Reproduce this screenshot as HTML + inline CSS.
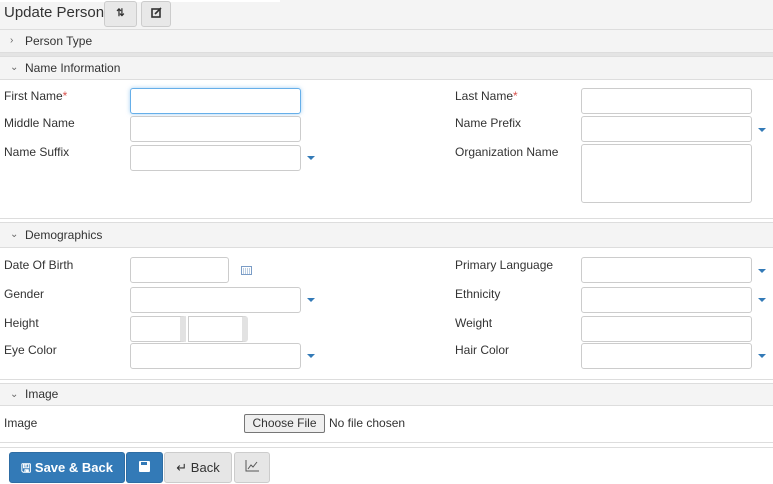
<!DOCTYPE html>
<html><head><style>
*{box-sizing:border-box;margin:0;padding:0}
body{width:773px;height:484px;background:#fff;font-family:"Liberation Sans",Arial,sans-serif;font-size:12px;color:#333;position:relative;overflow:hidden}
.a{position:absolute}
.hdr{position:absolute;left:0;width:773px;background:#f4f4f4;border-top:1px solid #ddd;border-bottom:1px solid #ddd;font-size:12px;color:#333;padding-left:25px;line-height:22px}
.hdr .c{position:absolute;left:10px;top:0;font-size:10px;color:#666}
.lbl{position:absolute;left:4px;font-size:12px;color:#333}
.rl{left:455px}
.in{position:absolute;border:1px solid #ccc;border-radius:3px;background:#fff;height:26px}
.car{position:absolute;width:0;height:0;border-left:4px solid transparent;border-right:4px solid transparent;border-top:4px solid #337ab7}
.req{color:#d9534f}
.btn{position:absolute;top:452px;height:31px;border-radius:3px;font-size:13px;line-height:29px;text-align:center}
.bp{background:#337ab7;border:1px solid #2e6da4;color:#fff}
.bd{background:#e6e6e6;border:1px solid #ccc;color:#333}
.line{position:absolute;left:0;width:773px;height:1px;background:#ddd}
</style></head><body>
<div class="a" style="left:0;top:0;width:773px;height:29px;background:#f4f4f4"></div>
<div class="a" style="left:0;top:0;width:280px;height:2px;background:#fff"></div>
<div class="a" style="left:4px;top:4px;font-size:15px;color:#333">Update Person</div>
<div class="a" style="left:104px;top:1px;width:33px;height:26px;background:#e8e8e8;border:1px solid #ccc;border-radius:3px;font-size:10px;text-align:center;line-height:24px;font-weight:bold">⇅</div>
<div class="a" style="left:141px;top:1px;width:30px;height:26px;background:#e8e8e8;border:1px solid #ccc;border-radius:3px;text-align:center;line-height:24px"><svg width="11" height="11" viewBox="0 0 11 11"><rect x="1" y="2" width="8" height="8" fill="none" stroke="#333" stroke-width="1.6"/><path d="M4 7 L10 1" stroke="#333" stroke-width="1.6"/></svg></div>

<div class="hdr" style="top:29px;height:24px"><span class="c">›</span>Person Type</div>
<div class="a" style="left:0;top:53px;width:773px;height:3px;background:#e4e4e4"></div>
<div class="hdr" style="top:56px;height:24px"><span class="c">⌄</span>Name Information</div>

<div class="lbl" style="top:89px">First Name<span class="req">*</span></div>
<div class="in" style="left:130px;top:88px;width:171px;border-color:#66afe9;box-shadow:0 0 4px rgba(102,175,233,.6)"></div>
<div class="lbl" style="top:116px">Middle Name</div>
<div class="in" style="left:130px;top:116px;width:171px"></div>
<div class="lbl" style="top:145px">Name Suffix</div>
<div class="in" style="left:130px;top:145px;width:171px"></div>
<div class="car" style="left:307px;top:156px"></div>

<div class="lbl rl" style="top:89px">Last Name<span class="req">*</span></div>
<div class="in" style="left:581px;top:88px;width:171px"></div>
<div class="lbl rl" style="top:116px">Name Prefix</div>
<div class="in" style="left:581px;top:116px;width:171px"></div>
<div class="car" style="left:758px;top:128px"></div>
<div class="lbl rl" style="top:145px">Organization Name</div>
<div class="in" style="left:581px;top:144px;width:171px;height:59px"></div>

<div class="line" style="top:218px"></div>
<div class="hdr" style="top:222px;height:26px;line-height:24px"><span class="c">⌄</span>Demographics</div>

<div class="lbl" style="top:258px">Date Of Birth</div>
<div class="in" style="left:130px;top:257px;width:99px"></div>
<svg class="a" style="left:241px;top:265px" width="11" height="10" viewBox="0 0 11 10"><rect x=".5" y="1.5" width="10" height="8" fill="none" stroke="#7a9cc6"/><path d="M2 4h7M2 6h7M2 8h7" stroke="#7a9cc6" stroke-dasharray="1 1"/></svg>
<div class="lbl" style="top:287px">Gender</div>
<div class="in" style="left:130px;top:287px;width:171px"></div>
<div class="car" style="left:307px;top:298px"></div>
<div class="lbl" style="top:316px">Height</div>
<div class="in" style="left:130px;top:316px;width:56px;border-right:6px solid #e2e2e2;border-radius:3px 0 0 3px"></div>
<div class="in" style="left:188px;top:316px;width:60px;border-right:6px solid #e2e2e2;border-radius:0 3px 3px 0"></div>
<div class="lbl" style="top:343px">Eye Color</div>
<div class="in" style="left:130px;top:343px;width:171px"></div>
<div class="car" style="left:307px;top:354px"></div>

<div class="lbl rl" style="top:258px">Primary Language</div>
<div class="in" style="left:581px;top:257px;width:171px"></div>
<div class="car" style="left:758px;top:269px"></div>
<div class="lbl rl" style="top:287px">Ethnicity</div>
<div class="in" style="left:581px;top:287px;width:171px"></div>
<div class="car" style="left:758px;top:298px"></div>
<div class="lbl rl" style="top:316px">Weight</div>
<div class="in" style="left:581px;top:316px;width:171px"></div>
<div class="lbl rl" style="top:343px">Hair Color</div>
<div class="in" style="left:581px;top:343px;width:171px"></div>
<div class="car" style="left:758px;top:354px"></div>

<div class="line" style="top:379px"></div>
<div class="hdr" style="top:383px;height:23px;line-height:21px"><span class="c">⌄</span>Image</div>
<div class="lbl" style="top:416px">Image</div>
<div class="a" style="left:244px;top:414px;width:81px;height:19px;border:1px solid #767676;background:#efefef;font-size:12px;text-align:center;line-height:17px;border-radius:2px">Choose File</div>
<div class="a" style="left:329px;top:416px;font-size:12px">No file chosen</div>

<div class="line" style="top:442px"></div>
<div class="line" style="top:447px"></div>
<div class="btn bp" style="left:9px;width:116px;font-weight:bold"><span style="font-size:12px">🖫</span> Save &amp; Back</div>
<div class="btn bp" style="left:126px;width:37px"><svg width="11" height="11" viewBox="0 0 11 11"><rect x="0" y="0" width="11" height="11" rx="1" fill="#fff"/><rect x="2" y="1" width="6" height="3" fill="#337ab7"/></svg></div>
<div class="btn bd" style="left:164px;width:68px">↵ Back</div>
<div class="btn bd" style="left:234px;width:36px"><svg width="14" height="12" viewBox="0 0 14 12"><path d="M1 0v11h13" fill="none" stroke="#555"/><path d="M3 9l3-4 2 2 4-5" fill="none" stroke="#555"/></svg></div>
</body></html>
